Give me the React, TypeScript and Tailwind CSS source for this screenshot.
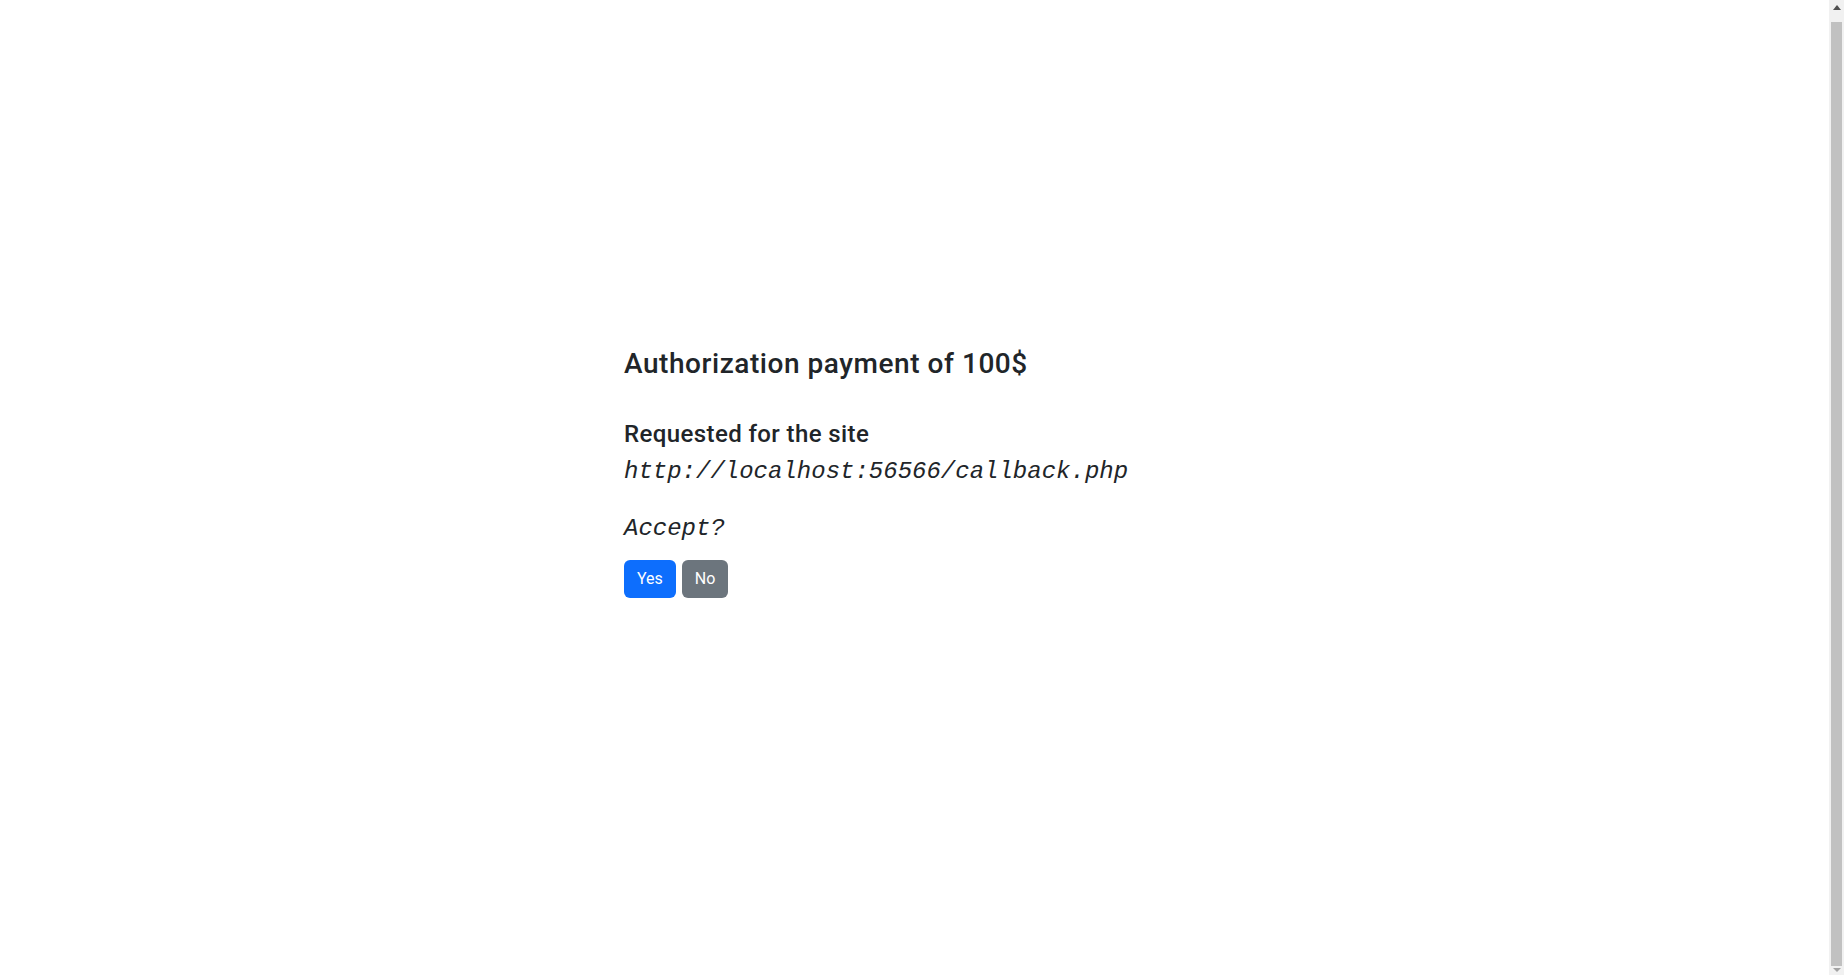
export default function App() {
  return (
    <div className="flex h-screen overflow-hidden bg-white font-['Roboto','Noto_Sans',sans-serif] text-[#212529]">
      <main className="flex-1">
        <div className="mx-auto w-[581px] pt-[347px]">
          <h3 className="mb-[39px] text-[28px] font-medium leading-[1.2] tracking-[0.55px]">
            Authorization payment of 100$
          </h3>
          <h4 className="text-[24px] font-medium leading-[1.2] tracking-[0.4px]">
            Requested for the site
          </h4>
          <p className="mt-[6px] font-['Liberation_Mono',monospace] text-[24px] italic leading-[36px]">
            http://localhost:56566/callback.php
          </p>
          <p className="mt-[21px] font-['Liberation_Mono',monospace] text-[24px] italic leading-[36px]">
            Accept?
          </p>
          <div className="mt-[13px] flex gap-[6px]">
            <button className="h-[38px] rounded-[6px] bg-[#0d6efd] px-[13px] text-base leading-6 text-white">
              Yes
            </button>
            <button className="h-[38px] rounded-[6px] bg-[#6c757d] px-[13px] text-base leading-6 text-white">
              No
            </button>
          </div>
        </div>
      </main>

      {/* scrollbar */}
      <div className="flex w-[15px] shrink-0 flex-col bg-[#f1f1f1]">
        <div className="flex h-[22px] shrink-0 justify-center pt-[5px]">
          <svg width="8" height="5" viewBox="0 0 8 5">
            <polygon points="4,0 8,5 0,5" fill="#505050" />
          </svg>
        </div>
        <div className="mx-[2px] flex-1 bg-[#c1c1c1]" />
        <div className="flex h-[9px] shrink-0 items-end justify-center pb-[3px]">
          <svg width="8" height="4" viewBox="0 0 8 4">
            <polygon points="0,0 8,0 4,4" fill="#a3a3a3" />
          </svg>
        </div>
      </div>
    </div>
  );
}
